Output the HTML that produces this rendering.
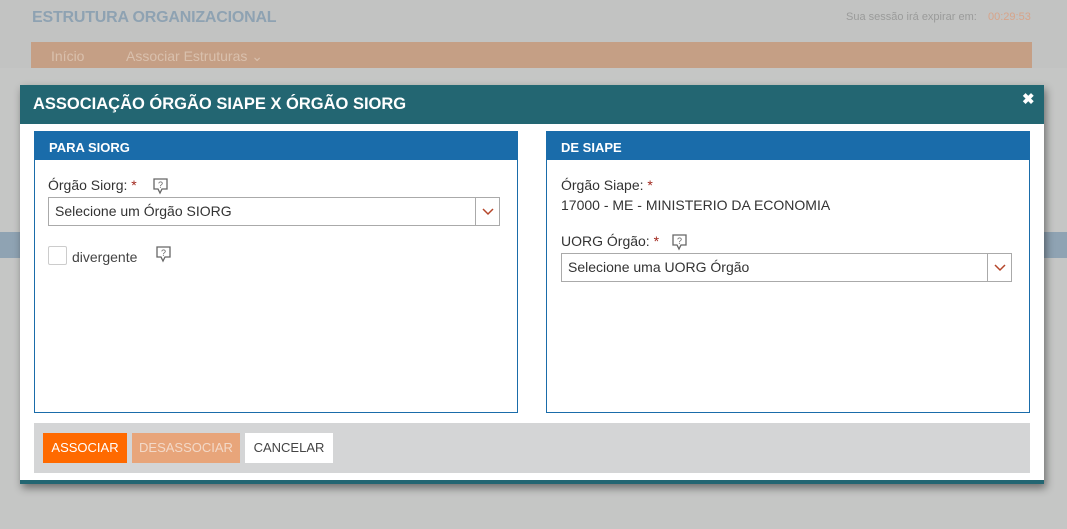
<!DOCTYPE html>
<html><head><meta charset="utf-8"><style>
*{box-sizing:border-box;margin:0;padding:0}
body{width:1067px;height:529px;background:#c5c6c5;font-family:"Liberation Sans",sans-serif;position:relative;overflow:hidden}
.abs{position:absolute}
.top{left:0;top:0;width:1067px;height:68px;background:#c2c3c2}
.lbl{font-size:14px;color:#333}
.star{color:#a0261c}
.sel{border:1px solid #aaa;background:#fff;height:29px;font-size:14px;color:#333;padding:5px 0 0 6px}
.sel .ar{position:absolute;right:0;top:0;width:24px;height:27px;border-left:1px solid #aaa}
.btn{top:433px;height:30px;font-size:13px;text-align:center;line-height:30px}
</style></head><body>
<div class="abs top"></div>
<div class="abs" style="left:32px;top:9px;font-size:16px;color:#8ea2b2;font-weight:bold;letter-spacing:-0.2px">ESTRUTURA ORGANIZACIONAL</div>
<div class="abs" style="left:846px;top:11px;font-size:11px;color:#9a9b9a">Sua sessão irá expirar em:</div>
<div class="abs" style="left:988px;top:11px;font-size:11px;color:#d7a48a">00:29:53</div>
<div class="abs" style="left:31px;top:42px;width:1001px;height:26px;background:#c59f85"></div>
<div class="abs" style="left:51px;top:48px;font-size:14px;color:#d9c0ad">Início</div>
<div class="abs" style="left:126px;top:48px;font-size:14px;color:#d9c0ad">Associar Estruturas ⌄</div>
<div class="abs" style="left:0;top:232px;width:1067px;height:26px;background:#8fa3b3"></div>
<div class="abs" style="left:20px;top:85px;width:1024px;height:399px;background:#fff;box-shadow:2px 4px 8px rgba(0,0,0,0.45);border-bottom:4px solid #236672">
  <div class="abs" style="left:0;top:0;width:1024px;height:39px;background:#236672"></div>
  <div class="abs" style="left:13px;top:10px;font-size:16.5px;font-weight:bold;color:#fff">ASSOCIAÇÃO ÓRGÃO SIAPE X ÓRGÃO SIORG</div>
  <div class="abs" style="left:1002px;top:5px;font-size:15px;font-weight:bold;color:#fff">✖</div>
</div>
<!-- left panel -->
<div class="abs" style="left:34px;top:131px;width:484px;height:282px;border:1px solid #1a6caa">
  <div style="height:28px;background:#1a6caa;color:#fff;font-weight:bold;font-size:13px;padding:8px 0 0 14px">PARA SIORG</div>
</div>
<div class="abs lbl" style="left:48px;top:177px">Órgão Siorg: <span class="star">*</span></div>
<svg class="abs" style="left:152px;top:177px" width="18" height="18" viewBox="0 0 18 18"><path d="M2 2h13v10H10l-2 4-2-4H2z" fill="none" stroke="#666" stroke-width="1.3"/><text x="8.5" y="11" font-size="9" text-anchor="middle" fill="#666" font-family="Liberation Sans">?</text></svg>
<div class="abs sel" style="left:48px;top:197px;width:452px">Selecione um Órgão SIORG<div class="ar"><svg width="24" height="27"><path d="M7 11l5 5 5-5" fill="none" stroke="#b5462a" stroke-width="1.5"/></svg></div></div>
<div class="abs" style="left:48px;top:246px;width:19px;height:19px;border:1px solid #ccc;border-radius:2px"></div>
<div class="abs lbl" style="left:72px;top:249px;color:#444">divergente</div>
<svg class="abs" style="left:155px;top:245px" width="18" height="18" viewBox="0 0 18 18"><path d="M2 2h13v10H10l-2 4-2-4H2z" fill="none" stroke="#666" stroke-width="1.3"/><text x="8.5" y="11" font-size="9" text-anchor="middle" fill="#666" font-family="Liberation Sans">?</text></svg>
<!-- right panel -->
<div class="abs" style="left:546px;top:131px;width:484px;height:282px;border:1px solid #1a6caa">
  <div style="height:28px;background:#1a6caa;color:#fff;font-weight:bold;font-size:13px;padding:8px 0 0 14px">DE SIAPE</div>
</div>
<div class="abs lbl" style="left:561px;top:177px">Órgão Siape: <span class="star">*</span></div>
<div class="abs lbl" style="left:561px;top:197px">17000 - ME - MINISTERIO DA ECONOMIA</div>
<div class="abs lbl" style="left:561px;top:233px">UORG Órgão: <span class="star">*</span></div>
<svg class="abs" style="left:671px;top:233px" width="18" height="18" viewBox="0 0 18 18"><path d="M2 2h13v10H10l-2 4-2-4H2z" fill="none" stroke="#666" stroke-width="1.3"/><text x="8.5" y="11" font-size="9" text-anchor="middle" fill="#666" font-family="Liberation Sans">?</text></svg>
<div class="abs sel" style="left:561px;top:253px;width:451px">Selecione uma UORG Órgão<div class="ar"><svg width="24" height="27"><path d="M7 11l5 5 5-5" fill="none" stroke="#b5462a" stroke-width="1.5"/></svg></div></div>
<!-- footer -->
<div class="abs" style="left:34px;top:423px;width:996px;height:50px;background:#d4d5d6"></div>
<div class="abs btn" style="left:43px;width:84px;background:#ff6a00;color:#fff">ASSOCIAR</div>
<div class="abs btn" style="left:132px;width:108px;background:#e8a57a;color:#f3d9c8">DESASSOCIAR</div>
<div class="abs btn" style="left:245px;width:88px;background:#fff;color:#444">CANCELAR</div>
</body></html>
